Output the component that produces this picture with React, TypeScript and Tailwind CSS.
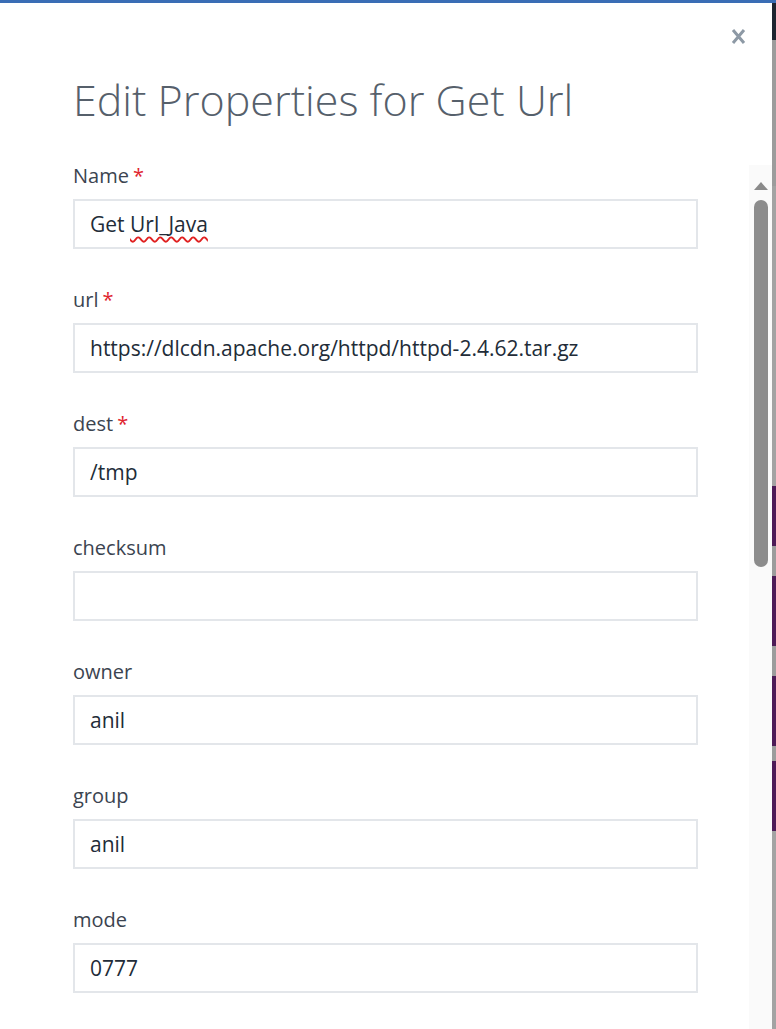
import React from "react";

const fields: { label: string; value: string; required?: boolean }[] = [
  { label: "Name", value: "Get Url_Java", required: true },
  { label: "url", value: "https://dlcdn.apache.org/httpd/httpd-2.4.62.tar.gz", required: true },
  { label: "dest", value: "/tmp", required: true },
  { label: "checksum", value: "" },
  { label: "owner", value: "anil" },
  { label: "group", value: "anil" },
  { label: "mode", value: "0777" },
];

export default function App() {
  return (
    <div
      className="relative w-[776px] h-[1029px] overflow-hidden bg-white flex"
      style={{ fontFamily: '"Open Sans", "Noto Sans", sans-serif' }}
    >
      <div className="absolute top-0 left-0 right-0 h-[3px] bg-[#3a6db5] z-10" />
      <div className="relative w-[772px] h-full bg-white">
        <button className="absolute right-[26px] top-[28px] text-[#8d99a5]">
          <svg width="15" height="17" viewBox="0 0 15 17">
            <path d="M2 2 L13 15 M13 2 L2 15" stroke="#8d99a5" strokeWidth="3" strokeLinecap="butt" />
          </svg>
        </button>
        <div className="flex">
          <div className="pl-[73px] w-[749px]">
            <h1 className="pt-[72px] text-[43px] leading-[56px] font-light text-[#56606b]">
              Edit Properties for Get Url
            </h1>
            <div className="mt-[35px] flex flex-col">
              {fields.map((f) => (
                <div key={f.label} className="flex flex-col h-[124px]">
                  <div className="text-[20px] leading-[26px] text-[#3b4450] flex gap-[4px]">
                    <span>{f.label}</span>
                    {f.required && <span className="text-[#e0242e]">*</span>}
                  </div>
                  <div className="mt-[10px] w-[625px] h-[50px] border-2 border-[#e3e6ea] flex items-center pl-[15px] pt-[2px] text-[21px] text-[#222c38]">
                    {f.label === "Name" ? (
                      <span>
                        Get{" "}
                        <span className="underline decoration-wavy decoration-[#e02020] underline-offset-[4px] decoration-[1.5px]">
                          Url_Java
                        </span>
                      </span>
                    ) : (
                      <span>{f.value}</span>
                    )}
                  </div>
                </div>
              ))}
            </div>
          </div>
        </div>
        <div className="absolute left-[749px] top-[165px] w-[23px] bottom-0 bg-[#fafafa] flex flex-col items-center">
          <svg width="14" height="9" viewBox="0 0 14 9" className="mt-[16px]">
            <path d="M0 9 L7 1 L14 9 Z" fill="#8a8a8a" />
          </svg>
          <div className="mt-[10px] w-[14px] h-[367px] rounded-full bg-[#8c8c8c]" />
        </div>
      </div>
      <div className="w-[4px] h-full flex flex-col">
        <div className="h-[40px] bg-[#1e2530]" />
        <div className="h-[146px] bg-[#9c9c9c]" />
        <div className="h-[300px] bg-[#a3a3a3]" />
        <div className="h-[60px] bg-[#4e1a57]" />
        <div className="h-[30px] bg-[#9c9c9c]" />
        <div className="h-[70px] bg-[#4e1a57]" />
        <div className="h-[30px] bg-[#9c9c9c]" />
        <div className="h-[70px] bg-[#4e1a57]" />
        <div className="h-[15px] bg-[#9c9c9c]" />
        <div className="h-[70px] bg-[#4e1a57]" />
        <div className="flex-1 bg-[#a3a3a3]" />
      </div>
    </div>
  );
}
